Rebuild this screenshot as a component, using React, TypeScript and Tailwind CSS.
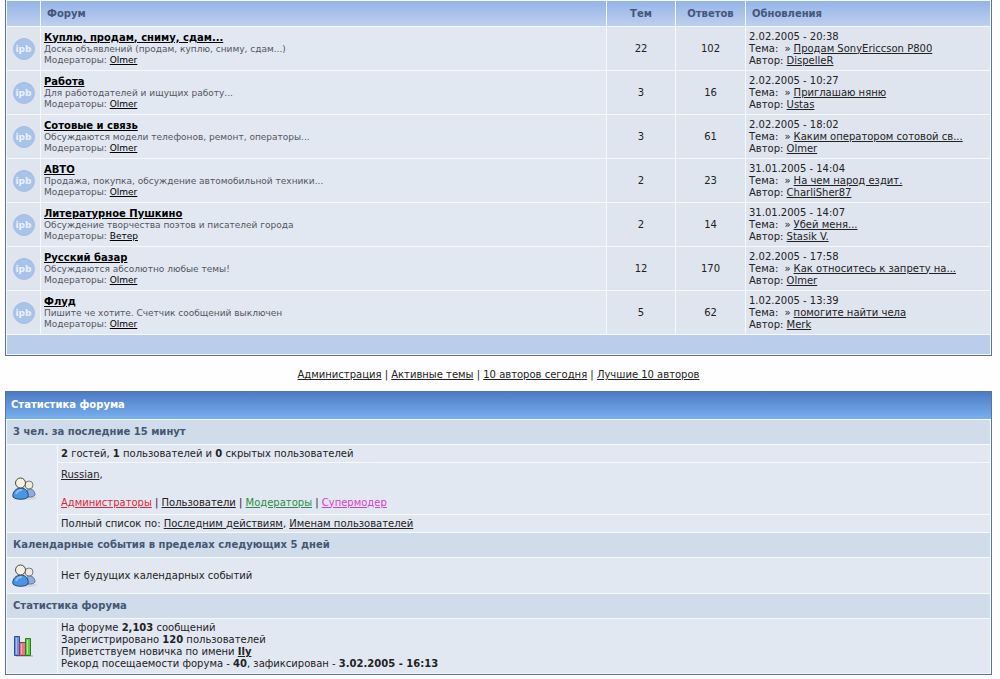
import type { ReactNode } from "react"

const forums = [
  { name: "Куплю, продам, сниму, сдам...", about: "Доска объявлений (продам, куплю, сниму, сдам...)", moderator: "Olmer", topics: 22, replies: 102, date: "2.02.2005 - 20:38", topic: "Продам SonyEriccson P800", author: "DispelleR" },
  { name: "Работа", about: "Для работодателей и ищущих работу...", moderator: "Olmer", topics: 3, replies: 16, date: "2.02.2005 - 10:27", topic: "Приглашаю няню", author: "Ustas" },
  { name: "Сотовые и связь", about: "Обсуждаются модели телефонов, ремонт, операторы...", moderator: "Olmer", topics: 3, replies: 61, date: "2.02.2005 - 18:02", topic: "Каким оператором сотовой св...", author: "Olmer" },
  { name: "АВТО", about: "Продажа, покупка, обсуждение автомобильной техники...", moderator: "Olmer", topics: 2, replies: 23, date: "31.01.2005 - 14:04", topic: "На чем народ ездит.", author: "CharliSher87" },
  { name: "Литературное Пушкино", about: "Обсуждение творчества поэтов и писателей города", moderator: "Ветер", topics: 2, replies: 14, date: "31.01.2005 - 14:07", topic: "Убей меня...", author: "Stasik V." },
  { name: "Русский базар", about: "Обсуждаются абсолютно любые темы!", moderator: "Olmer", topics: 12, replies: 170, date: "2.02.2005 - 17:58", topic: "Как относитесь к запрету на...", author: "Olmer" },
  { name: "Флуд", about: "Пишите че хотите. Счетчик сообщений выключен", moderator: "Olmer", topics: 5, replies: 62, date: "1.02.2005 - 13:39", topic: "помогите найти чела", author: "Merk" },
]

const A = ({ children, className = "" }: { children: ReactNode; className?: string }) => (
  <a href="#" className={`underline ${className}`}>{children}</a>
)

const ForumIcon = () => (
  <div className="mx-auto flex size-[22px] items-center justify-center rounded-full border border-[#a3bee5] bg-[#a9c3e8] text-[9px] leading-3 font-bold text-[#e9f1fb]">
    ipb
  </div>
)

const UsersIcon = () => (
  <svg width="26" height="24" viewBox="0 0 26 24" className="mx-[2px] block">
    <ellipse cx="14" cy="21" rx="11" ry="2" fill="#c3ccd6" opacity=".6" />
    <path d="M13 19c0-4 2-7 5-7s5 3 5 6c-1 2-7 3-10 1z" fill="#8caee0" stroke="#5d7395" />
    <circle cx="17" cy="8" r="4" fill="#eeeae0" stroke="#7c7a73" />
    <path d="M1 20c-1-5 3-9 8-9s8 4 7 9c-3 3-12 3-15 0z" fill="#4b94e1" stroke="#254875" />
    <path d="M4 17c1-3 3-4 6-4" stroke="#8cc0f5" strokeWidth="2" fill="none" />
    <circle cx="8.500" cy="6" r="5" fill="#f5f0df" stroke="#4a4941" />
  </svg>
)

const ChartIcon = () => (
  <svg width="26" height="24" viewBox="0 0 26 24" className="mx-[2px] block">
    <path d="M4 21h17v2H4z" fill="#bcc4cd" />
    <path d="M2.500 2.500h5v19h-5z" fill="#6b94e5" stroke="#304c8c" />
    <path d="M4.500 4v16" stroke="#a5c0f6" />
    <path d="M7.500 8.500h6v13h-6z" fill="#ef7285" stroke="#96384b" />
    <path d="M9.500 10v10" stroke="#f8adb8" />
    <path d="M13.500 4.500h5v17h-5z" fill="#61cc48" stroke="#2e7622" />
    <path d="M15.500 6v14" stroke="#a5ec8c" />
  </svg>
)

const SectionTitle = ({ children }: { children: string }) => (
  <tr>
    <th colSpan={2} className="h-6 bg-[#d0dce9] px-[6px] text-left text-[#465675]">{children}</th>
  </tr>
)

const ForumTable = () => (
  <table className="w-full table-fixed border-separate border-spacing-px border border-t-0 border-[#5a739d] bg-[#f6f9fc]">
    <colgroup>
      <col className="w-[33px]" />
      <col />
      <col className="w-[68px]" />
      <col className="w-[69px]" />
      <col className="w-[244px]" />
    </colgroup>
    <thead>
      <tr className="h-[25px] text-[#43577c] [&>th]:bg-linear-to-b [&>th]:from-[#94b4e6] [&>th]:to-[#bdd0ee]">
        <th></th>
        <th className="px-[6px] text-left">Форум</th>
        <th>Тем</th>
        <th>Ответов</th>
        <th className="px-[6px] text-left">Обновления</th>
      </tr>
    </thead>
    <tbody>
      {forums.map((forum) => (
        <tr key={forum.name} className="h-[43px] bg-[#dfe5ef]">
          <td><ForumIcon /></td>
          <td className="bg-[#e2e8f1] px-[3px] text-[9px] leading-[11px] text-[#52565e]">
            <A className="text-[10px] font-bold text-black">{forum.name}</A>
            <div>{forum.about}</div>
            <div>Модераторы: <A className="text-black">{forum.moderator}</A></div>
          </td>
          <td className="text-center">{forum.topics}</td>
          <td className="text-center">{forum.replies}</td>
          <td className="px-[3px] whitespace-nowrap">
            <div>{forum.date}</div>
            <div>Тема: <span className="mx-[3px]">»</span><A>{forum.topic}</A></div>
            <div>Автор: <A>{forum.author}</A></div>
          </td>
        </tr>
      ))}
      <tr>
        <td colSpan={5} className="h-[19px] bg-[#bacdea]"></td>
      </tr>
    </tbody>
  </table>
)

const StatsTable = () => (
  <div className="border border-[#5a739d]">
    <h2 className="bg-linear-to-b from-[#4d7bc4] to-[#78b0f0] px-[5px] pt-[7px] pb-2 font-bold text-white">Статистика форума</h2>
    <table className="w-full table-fixed border-separate border-spacing-px bg-[#f6f9fc] [&_td]:bg-[#e2e8f1] [&_td]:px-[3px]">
      <colgroup>
        <col className="w-[50px]" />
        <col />
      </colgroup>
      <tbody>
        <SectionTitle>3 чел. за последние 15 минут</SectionTitle>
        <tr>
          <td rowSpan={3}><UsersIcon /></td>
          <td className="h-[17px]"><b>2</b> гостей, <b>1</b> пользователей и <b>0</b> скрытых пользователей</td>
        </tr>
        <tr>
          <td className="h-[51px]">
            <div className="mb-4"><A>Russian</A>,</div>
            <div>
              <A className="text-[#dc2838]">Администраторы</A> | <A>Пользователи</A> | <A className="text-[#2b8c49]">Модераторы</A> | <A className="text-[#d53fd0]">Супермодер</A>
            </div>
          </td>
        </tr>
        <tr>
          <td className="h-[17px]">Полный список по: <A>Последним действиям</A>, <A>Именам пользователей</A></td>
        </tr>
        <SectionTitle>Календарные события в пределах следующих 5 дней</SectionTitle>
        <tr>
          <td><UsersIcon /></td>
          <td className="h-[35px]">Нет будущих календарных событий</td>
        </tr>
        <SectionTitle>Статистика форума</SectionTitle>
        <tr>
          <td><ChartIcon /></td>
          <td className="h-[54px]">
            <div>На форуме <b>2,103</b> сообщений</div>
            <div>Зарегистрировано <b>120</b> пользователей</div>
            <div>Приветствуем новичка по имени <A className="font-bold">Ily</A></div>
            <div>Рекорд посещаемости форума - <b>40</b>, зафиксирован - <b>3.02.2005 - 16:13</b></div>
          </td>
        </tr>
      </tbody>
    </table>
  </div>
)

const App = () => {
  return (
    <main className="bg-[#fefefe] pr-2 pb-1 pl-[5px] font-['Verdana','DejaVu_Sans',sans-serif] text-[10px] leading-3 text-[#222]">
      <ForumTable />
      <nav className="pt-[13px] pb-[10px] text-center">
        <A>Администрация</A> | <A>Активные темы</A> | <A>10 авторов сегодня</A> | <A>Лучшие 10 авторов</A>
      </nav>
      <StatsTable />
    </main>
  )
}

export default App
